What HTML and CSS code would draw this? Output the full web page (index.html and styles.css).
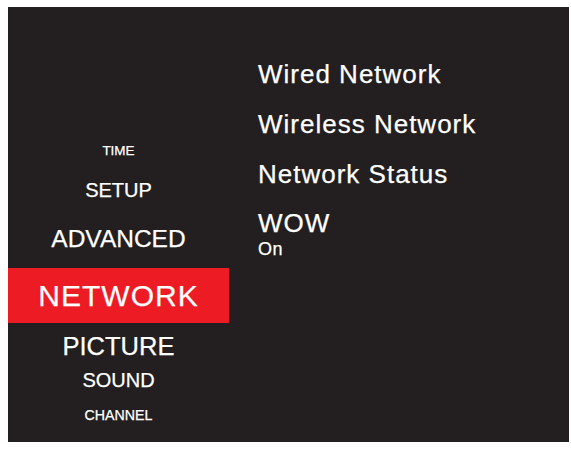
FILE: index.html
```html
<!DOCTYPE html>
<html lang="en">
<head>
<meta charset="utf-8">
<title>Network Menu</title>
<link rel="stylesheet" href="styles.css">
</head>
<body>
<div class="panel">
  <nav class="menu">
    <div class="item m-time">TIME</div>
    <div class="item m-setup">SETUP</div>
    <div class="item m-advanced">ADVANCED</div>
    <div class="item m-network active">NETWORK</div>
    <div class="item m-picture">PICTURE</div>
    <div class="item m-sound">SOUND</div>
    <div class="item m-channel">CHANNEL</div>
  </nav>
  <section class="options">
    <div class="opt">Wired Network</div>
    <div class="opt">Wireless Network</div>
    <div class="opt">Network Status</div>
    <div class="opt opt-wow">WOW</div>
    <div class="opt-value">On</div>
  </section>
</div>
</body>
</html>
```

FILE: styles.css
```css
html, body {
  margin: 0;
  padding: 0;
  background: #ffffff;
}

body {
  font-family: "Liberation Sans", Arial, Helvetica, sans-serif;
  color: #ffffff;
}

.panel {
  display: flex;
  width: 561px;
  height: 435px;
  margin: 7px 0 0 8px;
  background: #231f20;
  overflow: hidden;
  -webkit-text-stroke: 0.25px #ffffff;
}

.menu {
  width: 221px;
  flex: none;
  padding-top: 122px;
  display: flex;
  flex-direction: column;
}

.item {
  text-align: center;
  white-space: nowrap;
}

.m-time {
  font-size: 13.5px;
  line-height: 43.4px;
}

.m-setup {
  font-size: 20px;
  line-height: 36.5px;
}

.m-advanced {
  font-size: 24.5px;
  line-height: 59px;
}

.m-network {
  font-size: 30px;
  line-height: 55px;
  letter-spacing: 1px;
}

.active {
  background: #ed1c24;
}

.m-picture {
  font-size: 25.5px;
  line-height: 46px;
}

.m-sound {
  font-size: 20px;
  line-height: 23px;
}

.m-channel {
  font-size: 14.2px;
  line-height: 46px;
}

.options {
  flex: 1;
  padding: 41.5px 0 0 29px;
}

.opt {
  font-size: 26px;
  line-height: 50px;
  letter-spacing: 1px;
  white-space: nowrap;
}

.opt-wow {
  line-height: 26px;
  margin-top: 11.5px;
}

.opt-value {
  font-size: 18px;
  line-height: 20px;
  letter-spacing: 0.5px;
  margin-top: 2.5px;
}
```
